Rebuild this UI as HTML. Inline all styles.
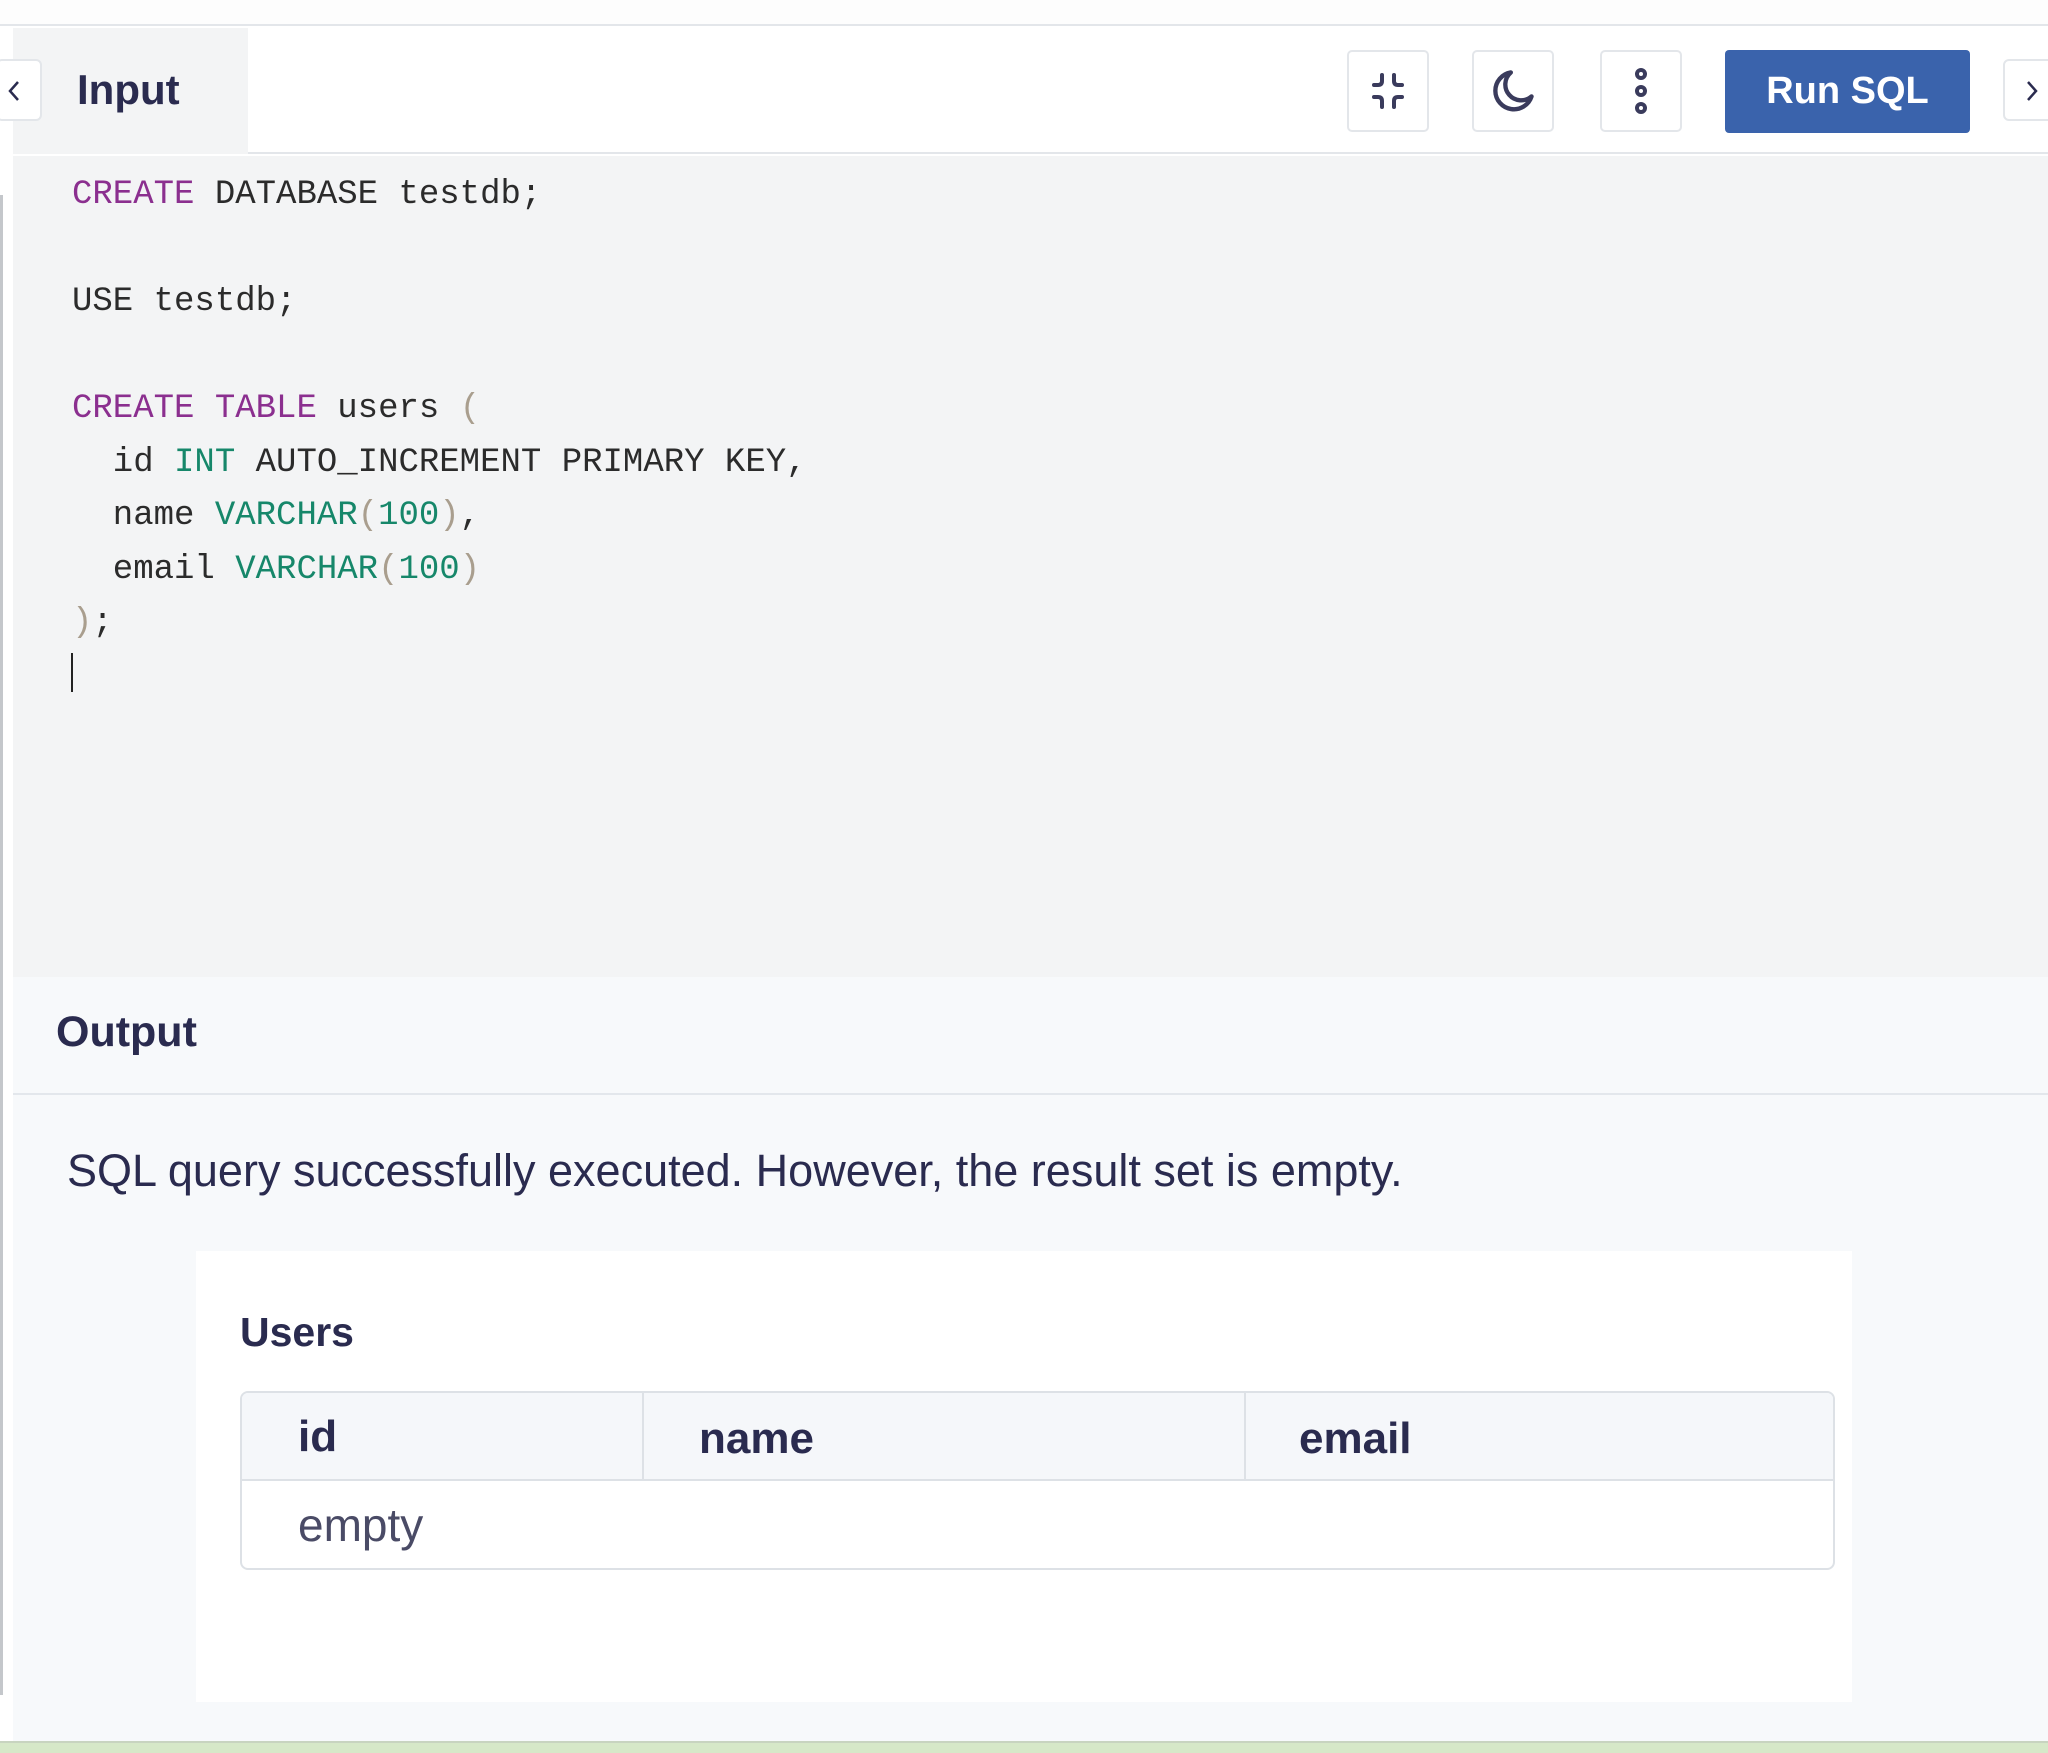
<!DOCTYPE html>
<html><head><meta charset="utf-8"><style>
*{margin:0;padding:0;box-sizing:border-box}
body{width:2048px;height:1753px;background:#fff;position:relative;overflow:hidden;font-family:"Liberation Sans",sans-serif;color:#2a2b4f}
.abs{position:absolute}
.btn{position:absolute;top:50px;height:82px;width:82px;background:#fff;border:2px solid #e3e6ea;border-radius:5px;display:flex;align-items:center;justify-content:center}
.code{position:absolute;left:72px;top:169px;font-family:"Liberation Mono",monospace;font-size:34px;line-height:53.5px;color:#2b2b2b;white-space:pre}
.k{color:#8b2f8f}.t{color:#16876a}.p{color:#a99e8e}
</style></head><body>
<div class="abs" style="left:0;top:0;width:2048px;height:26px;background:#fdfdfd;border-bottom:2px solid #e3e6ea"></div>
<div class="abs" style="left:0;top:195px;width:3px;height:1500px;background:#c4c7cb"></div>
<div class="abs" style="left:13px;top:28px;width:235px;height:126px;background:#f3f4f5"></div>
<div class="abs" style="left:248px;top:28px;width:1800px;height:126px;background:#fff;border-bottom:2px solid #e3e6ea"></div>
<div class="abs" style="left:-4px;top:59px;width:46px;height:62px;background:#fff;border:2px solid #e3e6ea;border-radius:6px"></div>
<svg class="abs" style="left:4px;top:78px" width="20" height="26"><path d="M14 4 L6 13 L14 22" fill="none" stroke="#2a2b4f" stroke-width="2.5"/></svg>
<div class="abs" style="left:77px;top:64px;font-size:42px;font-weight:bold;line-height:52px">Input</div>
<div class="btn" style="left:1347px"><svg width="44" height="44" viewBox="0 0 44 44" fill="none" stroke="#3a3b5c" stroke-width="4" stroke-linecap="round"><path d="M16 6v6q0 4-4 4H8M28 6v6q0 4 4 4h4M16 38v-6q0-4-4-4H8M28 38v-6q0-4 4-4h4"/></svg></div>
<div class="btn" style="left:1472px"><svg width="48" height="48" viewBox="0 0 44 44" fill="none" stroke="#3a3b5c" stroke-width="4" stroke-linejoin="round"><path d="M20 5A17 17 0 1 0 39 27A12 12 0 0 1 20 5Z"/></svg></div>
<div class="btn" style="left:1600px"><svg width="20" height="50" viewBox="0 0 20 50" fill="none" stroke="#3a3b5c" stroke-width="4"><circle cx="10" cy="8" r="4"/><circle cx="10" cy="25" r="4"/><circle cx="10" cy="42" r="4"/></svg></div>
<div class="abs" style="left:1725px;top:50px;width:245px;height:83px;background:#3a63ac;border-radius:4px;color:#fff;font-weight:bold;font-size:38px;display:flex;align-items:center;justify-content:center">Run SQL</div>
<div class="abs" style="left:2003px;top:59px;width:60px;height:62px;background:#fff;border:2px solid #e3e6ea;border-radius:6px"></div>
<svg class="abs" style="left:2022px;top:78px" width="20" height="26"><path d="M6 4 L14 13 L6 22" fill="none" stroke="#2a2b4f" stroke-width="2.5"/></svg>
<div class="abs" style="left:13px;top:156px;width:2035px;height:821px;background:#f3f4f5"></div>
<div class="code"><span class="k">CREATE</span> DATABASE testdb;

USE testdb;

<span class="k">CREATE</span> <span class="k">TABLE</span> users <span class="p">(</span>
  id <span class="t">INT</span> AUTO_INCREMENT PRIMARY KEY,
  name <span class="t">VARCHAR</span><span class="p">(</span><span class="t">100</span><span class="p">)</span>,
  email <span class="t">VARCHAR</span><span class="p">(</span><span class="t">100</span><span class="p">)</span>
<span class="p">)</span>;</div>
<div class="abs" style="left:71px;top:653px;width:2px;height:39px;background:#222"></div>
<div class="abs" style="left:13px;top:977px;width:2035px;height:766px;background:#f7f9fb"></div>
<div class="abs" style="left:13px;top:1093px;width:2035px;height:2px;background:#e3e7ec"></div>
<div class="abs" style="left:56px;top:1008px;font-size:43px;font-weight:bold;line-height:48px">Output</div>
<div class="abs" style="left:67px;top:1145px;font-size:45px;line-height:52px">SQL query successfully executed. However, the result set is empty.</div>
<div class="abs" style="left:196px;top:1251px;width:1656px;height:451px;background:#fff"></div>
<div class="abs" style="left:240px;top:1308px;font-size:41px;font-weight:bold;line-height:48px">Users</div>
<div class="abs" style="left:240px;top:1391px;width:1595px;height:179px;border:2px solid #dde1e6;border-radius:8px;overflow:hidden">
 <div class="abs" style="left:0;top:0;width:1595px;height:88px;background:#f5f7fa;border-bottom:2px solid #dde1e6"></div>
 <div class="abs" style="left:400px;top:0;width:2px;height:88px;background:#dde1e6"></div>
 <div class="abs" style="left:1002px;top:0;width:2px;height:88px;background:#dde1e6"></div>
 <div class="abs" style="left:56px;top:18px;font-size:44px;font-weight:bold;line-height:52px">id</div>
 <div class="abs" style="left:457px;top:20px;font-size:44px;font-weight:bold;line-height:52px">name</div>
 <div class="abs" style="left:1057px;top:20px;font-size:44px;font-weight:bold;line-height:52px">email</div>
 <div class="abs" style="left:56px;top:106px;font-size:46px;line-height:52px;color:#4a4b66">empty</div>
</div>
<div class="abs" style="left:0;top:1741px;width:2048px;height:12px;background:#d6e8c8;border-top:2px solid #c8d4c0"></div>
</body></html>
